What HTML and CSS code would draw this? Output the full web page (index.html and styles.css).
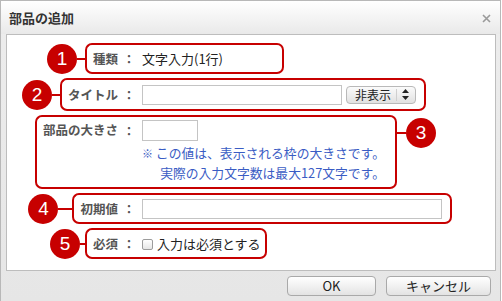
FILE: index.html
```html
<!DOCTYPE html>
<html lang="ja">
<head>
    <meta charset="UTF-8">
    <title>部品の追加</title>
    <link rel="stylesheet" href="styles.css">
</head>
<body>
    <div class="dialog">
        <!-- タイトルバー -->
        <div class="titlebar">
            <h1 class="title">部品の追加</h1>
            <svg class="close" width="9" height="9" viewBox="0 0 9 9">
                <path d="M1 1 L8 8 M8 1 L1 8" stroke="#9a9a9a" stroke-width="1.6" fill="none"/>
            </svg>
        </div>

        <!-- 入力パネル -->
        <div class="panel">
            <div class="form">
                <div class="row row-type">
                    <div class="lead">
                        <span class="pin"><span class="badge">1</span><span class="wire"></span></span>
                        <span class="tag">種類</span>
                    </div>
                    <div class="field">
                        <span class="colon">：</span>
                        <span class="value">文字入力(1行)</span>
                    </div>
                </div>

                <div class="row row-title">
                    <div class="lead">
                        <span class="pin"><span class="badge">2</span><span class="wire"></span></span>
                        <span class="tag">タイトル</span>
                    </div>
                    <div class="field">
                        <span class="colon">：</span>
                        <input type="text" class="text-input input-title">
                        <span class="select">
                            <span class="select-text">非表示</span>
                            <span class="select-arrows">
                                <svg width="7" height="11" viewBox="0 0 7 11">
                                    <path d="M3.5 0 L7 4 L0 4 Z M0 7 L7 7 L3.5 11 Z" fill="#222"/>
                                </svg>
                            </span>
                        </span>
                    </div>
                </div>

                <div class="row row-size">
                    <div class="lead">
                        <span class="tag">部品の大きさ</span>
                    </div>
                    <div class="field">
                        <div class="field-line">
                            <span class="colon">：</span>
                            <input type="text" class="text-input input-size">
                        </div>
                        <div class="note">
                            <p><span class="mark">※</span> この値は、表示される枠の大きさです。</p>
                            <p>実際の入力文字数は最大127文字です。</p>
                        </div>
                    </div>
                    <span class="pin pin-right"><span class="wire"></span><span class="badge">3</span></span>
                </div>

                <div class="row row-default">
                    <div class="lead">
                        <span class="pin"><span class="badge">4</span><span class="wire"></span></span>
                        <span class="tag">初期値</span>
                    </div>
                    <div class="field">
                        <span class="colon">：</span>
                        <input type="text" class="text-input input-default">
                    </div>
                </div>

                <div class="row row-required">
                    <div class="lead">
                        <span class="pin"><span class="badge">5</span><span class="wire"></span></span>
                        <span class="tag">必須</span>
                    </div>
                    <div class="field">
                        <span class="colon">：</span>
                        <label class="check"><input type="checkbox">入力は必須とする</label>
                    </div>
                </div>
            </div>
        </div>

        <!-- ボタン -->
        <div class="footer">
            <button class="btn btn-ok">OK</button>
            <button class="btn btn-cancel">キャンセル</button>
        </div>
    </div>
</body>
</html>
```

FILE: styles.css
```css
:root {
    --red: #c70000;
    --label: #555;
    --text: #222;
    --note: #3a5cc4;
    --line: #c4c4c4;
}

body {
    margin: 0;
    background: #fff;
    font-family: "Noto Sans CJK JP", "Noto Sans", sans-serif;
    color: var(--text);
}

.dialog {
    width: 501px;
    height: 301px;
    box-sizing: border-box;
    border: 1px solid #b8b8b8;
    border-bottom: none;
    background: linear-gradient(#ededed, #e6e6e6);
    display: flex;
    flex-direction: column;
}

/* タイトルバー */
.titlebar {
    height: 33px;
    display: flex;
    align-items: center;
    justify-content: space-between;
    padding: 0 9px 0 8px;
    background: linear-gradient(#ffffff, #e9e9e9);
}

.title {
    margin: 0;
    font-size: 13px;
    font-weight: bold;
    color: #333;
    line-height: 16px;
}

.close {
    margin-top: 2px;
}

/* パネル */
.panel {
    height: 237px;
    box-sizing: border-box;
    margin: 0 4px 0 5px;
    border: 1px solid #bdbdbd;
    background: #fff;
}

.form {
    display: flex;
    flex-direction: column;
    gap: 4px;
    padding-top: 8px;
}

.row {
    display: flex;
    align-items: stretch;
    height: 31px;
}

.row-title { height: 33px; }
.row-size { height: 74px; }

.lead {
    width: 111px;
    flex: none;
    display: flex;
    justify-content: flex-end;
    align-items: center;
}

.tag {
    align-self: stretch;
    display: flex;
    align-items: center;
    padding-left: 6px;
    border: 2px solid var(--red);
    border-right: none;
    border-radius: 7px 0 0 7px;
    font-size: 12.5px;
    font-weight: bold;
    color: var(--label);
    white-space: nowrap;
}

.field {
    display: flex;
    align-items: center;
    padding-right: 8px;
    border: 2px solid var(--red);
    border-left: none;
    border-radius: 0 7px 7px 0;
    font-size: 13px;
}

.colon {
    width: 12px;
    margin: 0 7px 0 5px;
    font-size: 12px;
    font-weight: bold;
    color: var(--label);
}

.value {
    line-height: 16px;
}

/* 番号マーク */
.pin {
    display: flex;
    align-items: center;
}

.badge {
    width: 30px;
    height: 30px;
    border-radius: 50%;
    background: var(--red);
    color: #fff;
    font-family: "Liberation Sans", Arial, sans-serif;
    font-size: 19px;
    line-height: 30px;
    text-align: center;
}

.wire {
    width: 8px;
    height: 2px;
    background: var(--red);
}

.row-default .wire { width: 14px; }
.row-required .wire { width: 5px; }

.pin-right {
    align-self: flex-start;
    margin-top: 3px;
}

.pin-right .wire { width: 9px; }

/* 各行 */
.row-type .field {
    width: 166px;
    box-sizing: border-box;
}

.row-size .tag {
    align-items: flex-start;
    padding-top: 5px;
    line-height: 16px;
}

.row-size .field {
    display: block;
    padding: 3px 10px 0 0;
}

.field-line {
    display: flex;
    align-items: center;
}

.note {
    margin-top: 2px;
    padding-left: 24px;
    text-align: right;
    color: var(--note);
    font-size: 12.8px;
    line-height: 20px;
}

.note p {
    margin: 0;
}

.mark {
    font-size: 11px;
}

.row-required .field {
    padding-right: 4px;
}

/* 入力欄 */
.text-input {
    box-sizing: border-box;
    height: 20px;
    margin: 0;
    border: 1px solid var(--line);
    padding: 0 3px;
    background: #fff;
    font: inherit;
}

.input-title { width: 200px; }
.input-default { width: 300px; }

.input-size {
    width: 56px;
    height: 21px;
}

.select {
    display: flex;
    align-items: center;
    height: 18px;
    margin-left: 4px;
    box-sizing: border-box;
    border: 1px solid #b9b9b9;
    border-radius: 4px;
    background: linear-gradient(#fbfbfb, #e1e1e1);
}

.select-text {
    padding: 0 5px 0 8px;
    font-size: 12px;
    line-height: 16px;
}

.select-arrows {
    display: flex;
    align-items: center;
    height: 12px;
    padding: 0 6px 0 5px;
    border-left: 1px solid #cfcfcf;
}

.check {
    display: flex;
    align-items: center;
    gap: 4px;
}

.check input {
    appearance: none;
    width: 11px;
    height: 11px;
    margin: 1px 0 0;
    border: 1px solid #9c9c9c;
    border-radius: 2px;
    background: linear-gradient(#fff, #e6e6e6);
}

/* ボタン */
.footer {
    display: flex;
    justify-content: flex-end;
    gap: 10px;
    padding: 5px 9px 0 0;
}

.btn {
    height: 20px;
    box-sizing: border-box;
    border: 1px solid #a9a9a9;
    border-radius: 4px;
    background: linear-gradient(#ffffff, #e3e3e3);
    font-family: "Noto Sans CJK JP", sans-serif;
    font-size: 13px;
    line-height: 16px;
    color: #222;
    padding: 0;
}

.btn-ok { width: 89px; }
.btn-cancel { width: 105px; }
```
